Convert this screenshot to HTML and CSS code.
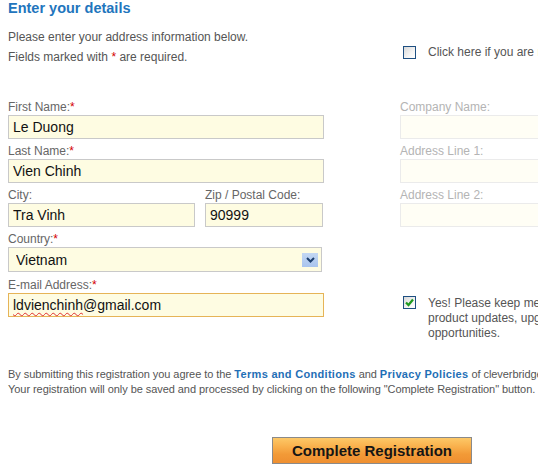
FILE: index.html
```html
<!DOCTYPE html>
<html lang="en">
<head>
<meta charset="utf-8">
<title>Enter your details</title>
<link rel="stylesheet" href="styles.css">
</head>
<body>
<div class="page">
  <h1 class="title">Enter your details</h1>
  <div class="columns">
    <div class="col-left">
      <p class="intro">Please enter your address information below.<br>Fields marked with <span class="req">*</span> are required.</p>
      <div class="field first">
        <label class="label" for="fn">First Name:<span class="req">*</span></label>
        <input class="input w-full" id="fn" type="text" value="Le Duong">
      </div>
      <div class="field">
        <label class="label" for="ln">Last Name:<span class="req">*</span></label>
        <input class="input w-full" id="ln" type="text" value="Vien Chinh">
      </div>
      <div class="field-row">
        <div class="field city">
          <label class="label" for="city">City:</label>
          <input class="input w-city" id="city" type="text" value="Tra Vinh">
        </div>
        <div class="field zip">
          <label class="label" for="zip">Zip / Postal Code:</label>
          <input class="input w-zip" id="zip" type="text" value="90999">
        </div>
      </div>
      <div class="field">
        <label class="label" for="country">Country:<span class="req">*</span></label>
        <div class="select-wrap">
          <select class="select" id="country"><option>Vietnam</option></select>
          <span class="select-arrow"><svg width="9" height="6" viewBox="0 0 9 6"><path d="M1 1 L4.5 4.5 L8 1" fill="none" stroke="#1d3f6e" stroke-width="2"/></svg></span>
        </div>
      </div>
      <div class="field email">
        <label class="label" for="email">E-mail Address:<span class="req">*</span></label>
        <div class="input input-focus w-full"><span class="misspelt">ldvienchinh</span>@gmail.com</div>
      </div>
    </div>
    <div class="col-right">
      <div class="check company-check">
        <span class="box"></span>
        <span class="check-text">Click here if you are registering as a company</span>
      </div>
      <div class="field company">
        <label class="label muted">Company Name:</label>
        <input class="input input-muted" type="text">
      </div>
      <div class="field">
        <label class="label muted">Address Line 1:</label>
        <input class="input input-muted" type="text">
      </div>
      <div class="field">
        <label class="label muted">Address Line 2:</label>
        <input class="input input-muted" type="text">
      </div>
      <div class="check optin">
        <span class="box checked"><svg width="11" height="11" viewBox="0 0 11 11"><path d="M2 5.5 L4.5 8 L9 2.5" fill="none" stroke="#1f9a1f" stroke-width="2.2"/></svg></span>
        <span class="check-text optin-text">Yes! Please keep me informed about special offers,<br>product updates, upgrades and business<br>opportunities.</span>
      </div>
    </div>
  </div>
  <p class="legal">By submitting this registration you agree to the <a class="link" href="#">Terms and Conditions</a> and <a class="link" href="#">Privacy Policies</a> of cleverbridge AG.<br>Your registration will only be saved and processed by clicking on the following "Complete Registration" button.</p>
  <div class="actions">
    <button class="btn" type="button">Complete Registration</button>
  </div>
</div>
</body>
</html>
```
FILE: styles.css
```css
html, body {
  margin: 0;
  padding: 0;
  background: #ffffff;
  overflow: hidden;
}
body {
  font-family: "Liberation Sans", Arial, sans-serif;
  font-size: 12px;
  color: #555555;
}
.page {
  padding: 0 0 0 8px;
  width: 700px;
}
.title {
  margin: 0;
  font-size: 14.5px;
  line-height: 17px;
  font-weight: bold;
  color: #2275bd;
}
.columns {
  display: flex;
  gap: 76px;
  align-items: flex-start;
}
.col-left {
  width: 316px;
  display: flex;
  flex-direction: column;
}
.col-right {
  width: 320px;
  display: flex;
  flex-direction: column;
}
.intro {
  margin: 10px 0 0;
  line-height: 20px;
  color: #555555;
}
.req {
  color: #d40000;
}
.field {
  display: flex;
  flex-direction: column;
  margin-top: 4px;
}
.field.first {
  margin-top: 32px;
}
.field.company {
  margin-top: 39px;
}
.field.email {
  margin-top: 5px;
}
.label {
  line-height: 16px;
  color: #666666;
}
.label.muted {
  color: #b4b4b4;
}
.input {
  box-sizing: border-box;
  height: 24px;
  border: 1px solid #c9c9c9;
  background: #fefce2;
  padding: 0 4px;
  margin: 0;
  font-family: "Liberation Sans", Arial, sans-serif;
  font-size: 14px;
  line-height: 22px;
  color: #111111;
  outline: none;
}
.w-full { width: 316px; }
.w-city { width: 187px; }
.w-zip { width: 118px; }
.field-row {
  display: flex;
  gap: 10px;
}
.input-focus {
  border-color: #e6b457;
}
.misspelt {
  text-decoration: underline wavy #e03030;
  text-decoration-thickness: 1px;
  text-underline-offset: 2px;
}
.input-muted {
  width: 320px;
  border-color: #ebebeb;
  background: #fffef5;
}
.select-wrap {
  position: relative;
  width: 314px;
  height: 25px;
}
.select {
  appearance: none;
  -webkit-appearance: none;
  box-sizing: border-box;
  width: 314px;
  height: 25px;
  margin: 0;
  border: 1px solid #c9c9c9;
  background: #fefce2;
  padding: 0 0 0 7px;
  font-family: "Liberation Sans", Arial, sans-serif;
  font-size: 14px;
  color: #111111;
  border-radius: 0;
  outline: none;
}
.select-arrow {
  position: absolute;
  right: 4px;
  top: 6px;
  width: 16px;
  height: 14px;
  background: linear-gradient(#c3d7f3, #a9c4ee);
  display: flex;
  align-items: center;
  justify-content: center;
}
.check {
  display: flex;
  align-items: flex-start;
  gap: 12px;
  padding-left: 3px;
}
.company-check {
  margin-top: 27px;
  line-height: 16px;
}
.box {
  box-sizing: border-box;
  width: 13px;
  height: 13px;
  margin-top: 2px;
  border: 1px solid #1e4f82;
  background: linear-gradient(135deg, #d8d8d8, #f4f4f4 60%, #ffffff);
  flex: none;
  display: flex;
  align-items: center;
  justify-content: center;
}
.optin .box {
  margin-top: 0;
}
.check-text {
  white-space: nowrap;
  color: #555555;
}
.optin {
  margin-top: 69px;
  line-height: 15px;
}
.legal {
  margin: 26px 0 0;
  font-size: 11px;
  line-height: 15px;
  letter-spacing: -0.06px;
  white-space: nowrap;
  color: #555555;
}
.link {
  color: #1f6fb6;
  font-weight: bold;
  letter-spacing: 0.3px;
  text-decoration: none;
}
.actions {
  margin-top: 40px;
  padding-left: 264px;
}
.btn {
  box-sizing: border-box;
  width: 200px;
  height: 27px;
  margin: 0;
  padding: 0;
  border: 1px solid #8a8a8a;
  background: linear-gradient(#fdc867 0%, #f9b04c 35%, #f29a37 65%, #ef8f30 100%);
  font-family: "Liberation Sans", Arial, sans-serif;
  font-size: 15px;
  font-weight: bold;
  color: #151515;
  border-radius: 0;
}
```
